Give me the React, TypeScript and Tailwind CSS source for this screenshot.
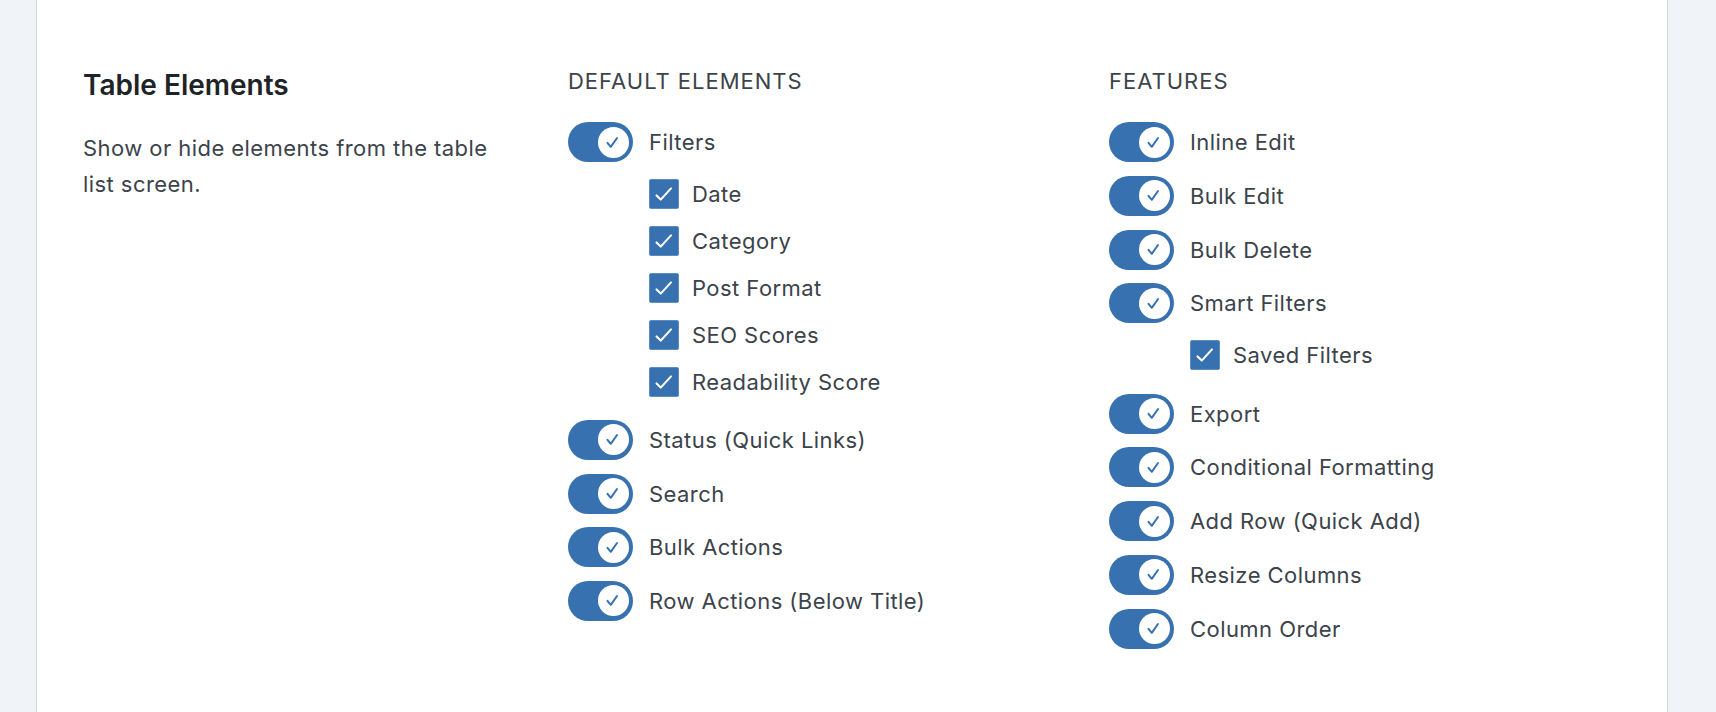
import React from "react";

const BLUE = "bg-[#3871b0]";

function Toggle() {
  return (
    <span className={`flex h-[40px] w-[65px] shrink-0 items-center justify-end rounded-full ${BLUE} pr-[4.5px]`}>
      <span className="flex h-[31px] w-[31px] items-center justify-center rounded-full bg-white">
        <svg width="31" height="31" viewBox="0 0 31 31" fill="none">
          <polyline
            points="9.5,15.8 12.8,19.8 19,11"
            stroke="#3871b0"
            strokeWidth="2"
            strokeLinecap="round"
            strokeLinejoin="round"
          />
        </svg>
      </span>
    </span>
  );
}

function Checkbox() {
  return (
    <span className={`flex h-[30px] w-[30px] shrink-0 items-center justify-center rounded-[2px] ${BLUE} border border-[#5d8cc0]`}>
      <svg width="30" height="30" viewBox="0 0 30 30" fill="none">
        <polyline
          points="7,16.5 11.5,21 22.5,9"
          stroke="#ffffff"
          strokeWidth="2.2"
          strokeLinecap="round"
          strokeLinejoin="round"
        />
      </svg>
    </span>
  );
}

function ToggleRow({ label }: { label: string }) {
  return (
    <div className="flex h-[40px] items-center gap-[16px]">
      <Toggle />
      <span className="text-[22px] leading-none tracking-[0.02em] text-[#3c434a]">{label}</span>
    </div>
  );
}

function CheckRow({ label }: { label: string }) {
  return (
    <div className="flex h-[30px] items-center gap-[13px]">
      <Checkbox />
      <span className="text-[22px] leading-none tracking-[0.02em] text-[#3c434a]">{label}</span>
    </div>
  );
}

function Group({ label, items }: { label: string; items: string[] }) {
  return (
    <div className="flex flex-col pb-[9.4px]">
      <ToggleRow label={label} />
      <div className="flex flex-col gap-[17px] pl-[81px] pt-[17px]">
        {items.map((i) => (
          <CheckRow key={i} label={i} />
        ))}
      </div>
    </div>
  );
}

export default function App() {
  return (
    <div
      className="flex min-h-screen bg-[#f0f3f8] pl-[36px] pr-[48px]"
      style={{ fontFamily: "Inter, 'Noto Sans', sans-serif" }}
    >
      <div className="min-h-screen w-[1632px] shrink-0 border-x border-[#d6dae1] bg-white shadow-[0_0_2px_rgba(0,0,0,0.06)]">
        <div className="grid grid-cols-[485px_541px_1fr] pl-[46px] pt-[68px]">
          <div>
            <h2 className="text-[28px] font-semibold leading-[34px] text-[#1e2327]">Table Elements</h2>
            <p className="mt-[28px] w-[425px] text-[22px] leading-[36px] tracking-[0.02em] text-[#3c434a]">
              Show or hide elements from the table list screen.
            </p>
          </div>
          <div>
            <h3 className="text-[22px] leading-[27px] tracking-[0.045em] text-[#3c434a]">DEFAULT ELEMENTS</h3>
            <div className="mt-[27px] flex flex-col gap-[13.6px]">
              <Group
                label="Filters"
                items={["Date", "Category", "Post Format", "SEO Scores", "Readability Score"]}
              />
              <ToggleRow label="Status (Quick Links)" />
              <ToggleRow label="Search" />
              <ToggleRow label="Bulk Actions" />
              <ToggleRow label="Row Actions (Below Title)" />
            </div>
          </div>
          <div>
            <h3 className="text-[22px] leading-[27px] tracking-[0.045em] text-[#3c434a]">FEATURES</h3>
            <div className="mt-[27px] flex flex-col gap-[13.8px]">
              <ToggleRow label="Inline Edit" />
              <ToggleRow label="Bulk Edit" />
              <ToggleRow label="Bulk Delete" />
              <Group label="Smart Filters" items={["Saved Filters"]} />
              <ToggleRow label="Export" />
              <ToggleRow label="Conditional Formatting" />
              <ToggleRow label="Add Row (Quick Add)" />
              <ToggleRow label="Resize Columns" />
              <ToggleRow label="Column Order" />
            </div>
          </div>
        </div>
      </div>
    </div>
  );
}
